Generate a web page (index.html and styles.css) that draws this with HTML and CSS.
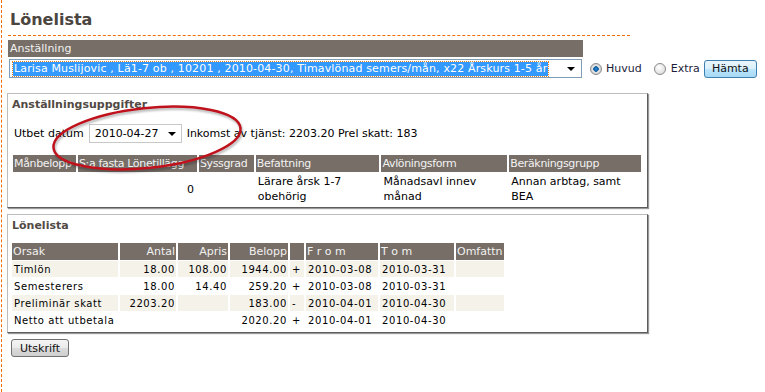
FILE: index.html
```html
<!DOCTYPE html>
<html lang="sv">
<head>
    <meta charset="UTF-8">
    <title>Lönelista</title>
    <link rel="stylesheet" href="styles.css">
</head>
<body>
    <div class="page">
        <h1 class="page-title">Lönelista</h1>

        <div class="bar">Anställning</div>
        <div class="pick-row">
            <div class="fake-select emp-select">
                <span class="picked">Larisa Muslijovic , Lä1-7 ob , 10201 , 2010-04-30, Timavlönad semers/mån, x22 Årskurs 1-5 år</span>
                <span class="arrow"></span>
            </div>
            <label class="radio"><span class="dot on"></span>Huvud</label>
            <label class="radio extra"><span class="dot"></span>Extra</label>
            <button class="btn btn-focus">Hämta</button>
        </div>

        <!-- Anställningsuppgifter -->
        <div class="panel info-panel">
            <h3>Anställningsuppgifter</h3>
            <div class="pay-line">
                <span>Utbet datum</span>
                <div class="fake-select date-select">2010-04-27<span class="arrow"></span></div>
                <span>Inkomst av tjänst: 2203.20 Prel skatt: 183</span>
            </div>
            <table class="grid info-grid">
                <thead>
                    <tr>
                        <th class="c-man">Månbelopp</th>
                        <th class="c-sum">S:a fasta Lönetillägg</th>
                        <th class="c-sys">Syssgrad</th>
                        <th class="c-bef">Befattning</th>
                        <th class="c-avl">Avlöningsform</th>
                        <th class="c-ber">Beräkningsgrupp</th>
                    </tr>
                </thead>
                <tbody>
                    <tr>
                        <td></td>
                        <td class="num">0</td>
                        <td></td>
                        <td>Lärare årsk 1-7 obehörig</td>
                        <td>Månadsavl innev månad</td>
                        <td>Annan arbtag, samt BEA</td>
                    </tr>
                </tbody>
            </table>
            <svg class="mark" width="210" height="80" viewBox="0 0 210 80">
                <ellipse cx="100" cy="37" rx="94" ry="30" transform="rotate(-6 100 37)" fill="none" stroke="#c0121c" stroke-width="2.5"/>
            </svg>
        </div>

        <!-- Lönelista -->
        <div class="panel pay-panel">
            <h3>Lönelista</h3>
            <table class="grid pay-grid">
                <thead>
                    <tr>
                        <th class="c-ors">Orsak</th>
                        <th class="c-ant num">Antal</th>
                        <th class="c-apr num">Apris</th>
                        <th class="c-bel num">Belopp</th>
                        <th class="c-sgn"></th>
                        <th class="c-from">F r o m</th>
                        <th class="c-tom">T o m</th>
                        <th class="c-omf">Omfattn</th>
                    </tr>
                </thead>
                <tbody>
                    <tr class="alt">
                        <td>Timlön</td><td class="num">18.00</td><td class="num">108.00</td><td class="num">1944.00</td><td>+</td><td>2010-03-08</td><td>2010-03-31</td><td></td>
                    </tr>
                    <tr>
                        <td>Semesterers</td><td class="num">18.00</td><td class="num">14.40</td><td class="num">259.20</td><td>+</td><td>2010-03-08</td><td>2010-03-31</td><td></td>
                    </tr>
                    <tr class="alt">
                        <td>Preliminär skatt</td><td class="num">2203.20</td><td class="num"></td><td class="num">183.00</td><td>-</td><td>2010-04-01</td><td>2010-04-30</td><td></td>
                    </tr>
                    <tr>
                        <td>Netto att utbetala</td><td class="num"></td><td class="num"></td><td class="num">2020.20</td><td>+</td><td>2010-04-01</td><td>2010-04-30</td><td></td>
                    </tr>
                </tbody>
            </table>
        </div>

        <button class="btn print-btn">Utskrift</button>
    </div>
</body>
</html>
```

FILE: styles.css
```css
/* Base */
* {
    box-sizing: border-box;
}

body {
    margin: 0;
    background: #fff;
    color: #000;
    font-family: "DejaVu Sans", Verdana, sans-serif;
    font-size: 11px;
}

.page {
    min-height: 392px;
    margin-left: 1px;
    padding-left: 6px;
    border-left: 1px dashed #f26c00;
}

.page-title {
    margin: 0;
    width: 622px;
    height: 36px;
    padding: 10px 0 0 2px;
    font-size: 16px;
    color: #4b4540;
    border-bottom: 1px dashed #f26c00;
}

.bar {
    margin-top: 4px;
    width: 575px;
    height: 17px;
    line-height: 17px;
    padding-left: 2px;
    background: #776e67;
    color: #f2f2f2;
}

/* Employee picker */
.pick-row {
    display: flex;
    align-items: center;
    margin-top: 2px;
    height: 19px;
}

.fake-select {
    position: relative;
    display: flex;
    align-items: center;
    background: #fff;
    border: 1px solid #7f9db9;
}

.fake-select .arrow {
    position: absolute;
    right: 6px;
    top: 7px;
    border-left: 4px solid transparent;
    border-right: 4px solid transparent;
    border-top: 4px solid #000;
}

.emp-select {
    margin-left: 1px;
    width: 573px;
    height: 19px;
}

.picked {
    flex-shrink: 0;
    margin-left: 3px;
    padding: 0 1px;
    line-height: 14px;
    background: #3399ff;
    color: #fff;
    outline: 1px dotted #e8801e;
    letter-spacing: 0.15px;
    white-space: nowrap;
}

.radio {
    display: flex;
    align-items: center;
    color: #1e1e3a;
}

.radio .dot {
    width: 12px;
    height: 12px;
    margin-right: 4px;
    border-radius: 50%;
    border: 1px solid #8a8a8a;
    background: radial-gradient(circle at 40% 35%, #fff, #d4d4d4);
}

.radio .dot.on {
    background: radial-gradient(circle, #2a8ad6 0, #0e5a9c 2.5px, #e8e8e8 3px, #c8c8c8 6px);
}

.pick-row .radio:first-of-type {
    margin-left: 8px;
}

.radio.extra {
    margin-left: 12px;
}

.radio.extra .dot {
    margin-right: 5px;
}

.btn {
    height: 18px;
    padding: 0 6px;
    font-family: "DejaVu Sans", Verdana, sans-serif;
    font-size: 11px;
    color: #111;
    border: 1px solid #707070;
    border-radius: 3px;
    background: linear-gradient(#f4f4f4, #ebebeb 50%, #dcdcdc 50%, #cfcfcf);
}

.btn-focus {
    margin-left: 4px;
    width: 53px;
    border-color: #3c7fb1;
    background: linear-gradient(#eaf6fd, #d9f0fc 50%, #bee6fd 50%, #a7d9f5);
}

/* Panels */
.panel {
    position: relative;
    width: 641px;
    margin-left: -1px;
    padding: 4px 4px 2px 4px;
    border: 1px solid #bcbcbc;
    border-right-color: #5c5c5c;
    border-bottom-color: #5c5c5c;
    box-shadow: 1px 1px 1px #9a9a9a;
}

.panel h3 {
    margin: 0;
    line-height: 13px;
    font-size: 11px;
    color: #514a44;
}

.info-panel {
    margin-top: 15px;
    height: 115px;
}

.pay-panel {
    margin-top: 6px;
    height: 119px;
}

.pay-line {
    display: flex;
    align-items: center;
    gap: 5px;
    margin-top: 13px;
    padding-left: 2px;
    height: 19px;
}

.date-select {
    width: 93px;
    height: 19px;
    padding-left: 5px;
    border-color: #c8c8c8;
}

.date-select .arrow {
    right: 5px;
}

.mark {
    position: absolute;
    left: 39px;
    top: 7px;
    filter: drop-shadow(1px 2px 1px rgba(0, 0, 0, 0.3));
}

/* Tables */
.grid {
    border-collapse: separate;
    table-layout: fixed;
}

.grid th {
    height: 17px;
    padding: 0 1px;
    background: #776e67;
    color: #f2f2f2;
    font-weight: normal;
    text-align: left;
    white-space: nowrap;
    overflow: hidden;
}

.grid .num {
    text-align: right;
}

.info-grid {
    margin: 12px 0 0 -1px;
    border-spacing: 2px 0;
}

.info-grid th {
    letter-spacing: -0.35px;
}

.info-grid td {
    padding: 2px 2px 0 2px;
    line-height: 15px;
    vertical-align: middle;
}

.info-grid .num {
    padding-right: 3px;
}

.c-man { width: 63px; }
.c-sum { width: 119px; }
.c-sys { width: 55px; }
.c-bef { width: 124px; }
.c-avl { width: 126px; }
.c-ber { width: 132px; }

.pay-panel h3 {
    margin-bottom: 10px;
}

.pay-grid {
    margin-left: -2px;
    border-spacing: 2px 1px;
}

.pay-grid td {
    height: 16px;
    padding: 0 2px;
    font-size: 10px;
    letter-spacing: 0.6px;
    white-space: nowrap;
}

.pay-grid td.num {
    padding-right: 1px;
}

.pay-grid .alt td {
    background: #f5f2ea;
}

.c-ors { width: 106px; }
.c-ant { width: 56px; }
.c-apr { width: 50px; }
.c-bel { width: 58px; }
.c-sgn { width: 14px; }
.c-from { width: 72px; }
.c-tom { width: 74px; }
.c-omf { width: 48px; }

.print-btn {
    display: block;
    margin: 6px 0 0 3px;
    width: 58px;
}
```
